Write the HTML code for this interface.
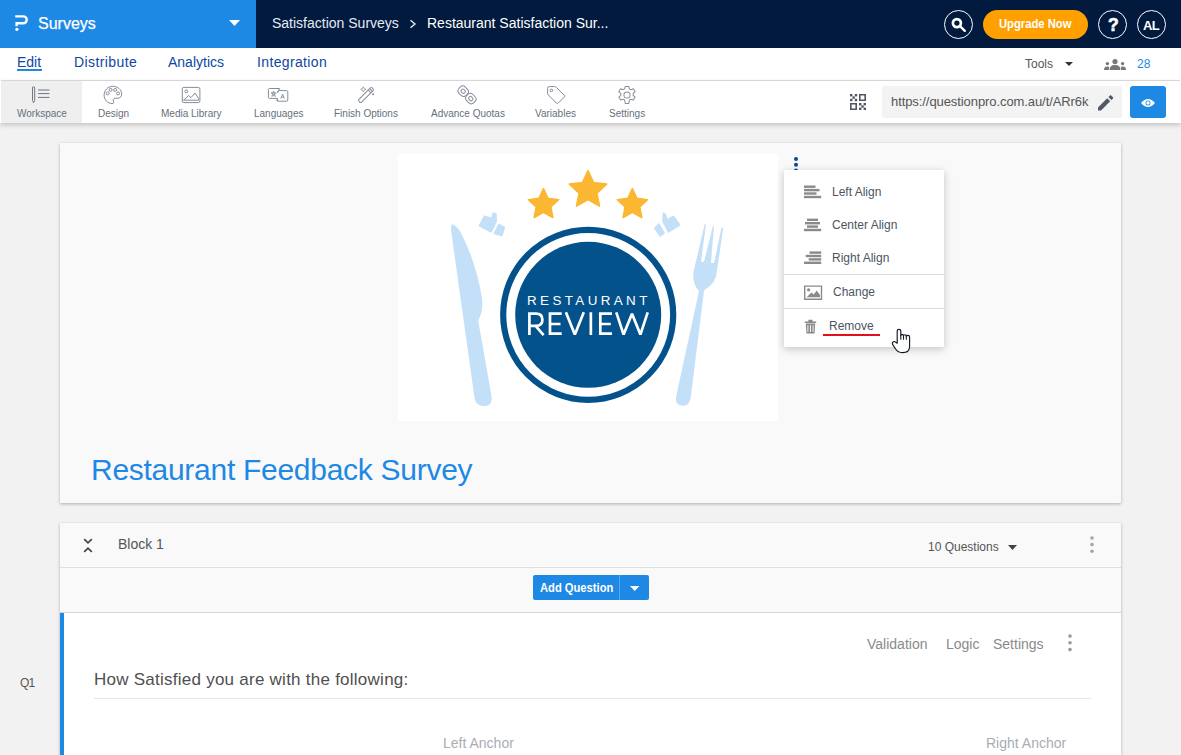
<!DOCTYPE html>
<html><head><meta charset="utf-8">
<style>
*{box-sizing:border-box;margin:0;padding:0}
html,body{width:1181px;height:755px;overflow:hidden;background:#f2f2f2;font-family:"Liberation Sans",sans-serif;position:relative}
.abs{position:absolute}
svg{position:absolute;overflow:visible}
#top{left:0;top:0;width:1181px;height:48px;background:#011a3e}
#brand{left:0;top:0;width:256px;height:48px;background:#1e88e5}
#nav{left:0;top:48px;width:1181px;height:33px;background:#fff}
#tool{left:0;top:81px;width:1181px;height:42px;background:#fff;box-shadow:0 2px 5px rgba(0,0,0,.2)}
.card{background:#f9f9f9;box-shadow:0 1px 3px rgba(0,0,0,.28)}
.t{position:absolute;white-space:nowrap;line-height:1}
.tl{font-size:10px;color:#66707d}
.mi{font-size:12px;color:#4d5561}
.circ{position:absolute;width:29px;height:29px;border:1.4px solid #fff;border-radius:50%;top:10px}
</style></head>
<body>
<!-- top bar -->
<div id="top" class="abs"></div>
<div id="brand" class="abs"></div>
<svg style="left:0;top:0" width="40" height="48" viewBox="0 0 40 48">
  <path d="M15.2 16.4 H23.3 A3.45 3.45 0 0 1 23.3 23.3 H16.6 V26.2" fill="none" stroke="#fff" stroke-width="2.4"/>
  <circle cx="16.9" cy="29.3" r="1.6" fill="#fff"/>
</svg>
<div class="t" style="left:38px;top:16px;font-size:16px;color:#fff;-webkit-text-stroke:0.25px #fff">Surveys</div>
<svg style="left:229px;top:20px" width="11" height="6" viewBox="0 0 11 6"><path d="M0 0H11L5.5 6Z" fill="#fff"/></svg>
<div class="t" style="left:272px;top:16px;font-size:14px;color:#e4ebf5">Satisfaction Surveys</div>
<svg style="left:409px;top:19px" width="8" height="10" viewBox="0 0 8 10"><path d="M1.5 1.2 L6 5 L1.5 8.8" fill="none" stroke="#e4ebf5" stroke-width="1.4"/></svg>
<div class="t" style="left:427px;top:16px;font-size:14px;color:#fff">Restaurant Satisfaction Sur...</div>

<div class="circ" style="left:944px"></div>
<svg style="left:944px;top:10px" width="29" height="29" viewBox="0 0 29 29">
  <circle cx="12.9" cy="13.1" r="4" fill="none" stroke="#fff" stroke-width="2.7"/>
  <path d="M16 16.2 L20.8 20.8" stroke="#fff" stroke-width="2.4" stroke-linecap="round"/>
</svg>
<div class="abs" style="left:983px;top:10px;width:105px;height:29px;border-radius:15px;background:#ffa000"></div>
<div class="t" style="left:999px;top:17px;font-size:13px;color:#fff;font-weight:bold;transform:scaleX(0.865);transform-origin:0 0">Upgrade Now</div>
<div class="circ" style="left:1098px"></div>
<div class="t" style="left:1108px;top:17px;font-size:17.5px;color:#fff;font-weight:bold;-webkit-text-stroke:0.6px #fff">?</div>
<div class="circ" style="left:1137px"></div>
<div class="t" style="left:1143px;top:19px;font-size:13px;color:#fff;font-weight:bold;letter-spacing:-0.7px">AL</div>

<!-- nav -->
<div id="nav" class="abs"></div>
<div class="abs" style="left:1px;top:80px;width:1179px;height:1px;background:#dddddd"></div>
<div class="t" style="left:17px;top:55px;font-size:14px;color:#0d47a1">Edit</div>
<div class="abs" style="left:17px;top:69px;width:25px;height:2px;background:#1e88e5"></div>
<div class="t" style="left:74px;top:55px;font-size:14px;color:#0d47a1;letter-spacing:0.4px">Distribute</div>
<div class="t" style="left:168px;top:55px;font-size:14px;color:#0d47a1">Analytics</div>
<div class="t" style="left:257px;top:55px;font-size:14px;color:#0d47a1;letter-spacing:0.36px">Integration</div>
<div class="t" style="left:1025px;top:58px;font-size:12px;color:#555">Tools</div>
<svg style="left:1065px;top:62px" width="8" height="4" viewBox="0 0 8 4"><path d="M0 0H8L4 4Z" fill="#333"/></svg>
<svg style="left:1104px;top:59px" width="22" height="11" viewBox="0 0 22 11">
  <circle cx="11" cy="2.6" r="2.6" fill="#777"/>
  <path d="M5.6 11 Q5.6 6 11 6 Q16.4 6 16.4 11Z" fill="#777"/>
  <circle cx="3.4" cy="4.6" r="1.7" fill="#777"/>
  <path d="M0 11 Q0 7.6 3.4 7.6 Q5 7.6 5.2 8.5 L4.8 11Z" fill="#777"/>
  <circle cx="18.6" cy="4.6" r="1.7" fill="#777"/>
  <path d="M22 11 Q22 7.6 18.6 7.6 Q17 7.6 16.8 8.5 L17.2 11Z" fill="#777"/>
</svg>
<div class="t" style="left:1137px;top:58px;font-size:12px;color:#1e88e5">28</div>

<!-- toolbar -->
<div id="tool" class="abs"></div>
<div class="abs" style="left:1px;top:81px;width:81px;height:42px;background:#efefef"></div>
<!-- workspace icon -->
<svg style="left:0;top:81px" width="100" height="42" viewBox="0 81 100 42" fill="none" stroke="#6f7782" stroke-width="1">
  <path d="M32.5 88 Q32.5 86.7 33.6 86.7 Q34.7 86.7 34.7 88 V100.4 L33.6 102.8 L32.5 100.4 Z"/>
  <path d="M38 90 H49.5 M38 93.6 H49.5 M38 97.4 H49.5"/>
</svg>
<div class="t tl" style="left:17px;top:109px">Workspace</div>
<!-- design palette -->
<svg style="left:0;top:81px" width="700" height="42" viewBox="0 81 700 42" fill="none" stroke="#858d98" stroke-width="1">
  <path d="M113 86.3 C107.6 86.3 104.1 90.4 104.1 95 C104.1 100 108 103.6 112 103.6 C113.8 103.6 114.2 102.4 113.6 101.3 C112.8 99.8 113.4 98.2 115.2 98.2 H117.6 C120 98.2 121.7 96.6 121.7 94 C121.7 89.8 117.8 86.3 113 86.3 Z"/>
  <circle cx="107.6" cy="93.4" r="1.5"/><circle cx="110.6" cy="89.9" r="1.5"/><circle cx="115.2" cy="89.9" r="1.5"/><circle cx="118.1" cy="93.4" r="1.5"/>
  <!-- media library -->
  <rect x="182.3" y="87.4" width="17.6" height="15.2" rx="1.6"/>
  <circle cx="186.3" cy="91.4" r="1.4"/>
  <path d="M183.6 100.2 L188.6 95.6 L191 97.6 L195 93 L198.6 98.6 V100.2 Z"/>
  <!-- languages -->
  <path d="M277.4 98.4 H269.4 Q268.4 98.4 268.4 97.4 V89.5 Q268.4 88.5 269.4 88.5 H279.6 L277.6 92.6 M277.6 92.6 Q277.6 90.6 279 90.6 H286.6 Q287.8 90.6 287.8 91.8 V100 Q287.8 101.2 286.6 101.2 H277.6 V98.6 L276.6 100.6"/>
  <path d="M273.6 91 L271.8 96.6 L276.2 92.8 H271 L275.4 96.6 Z" stroke-width="0.8" stroke-linejoin="round"/>
  <path d="M280.9 98.6 L282.6 94 L284.3 98.6 M281.5 97.2 H283.7" stroke-width="0.9"/>
  <!-- wand -->
  <g transform="rotate(-45 366 95)"><rect x="356.6" y="93.1" width="18.8" height="3.8" rx="1.3"/><path d="M371 93.1 V96.9 M373.1 93.1 V96.9"/></g>
  <path d="M363.3 86.8 Q363.7 89 365.9 89.4 Q363.7 89.8 363.3 92 Q362.9 89.8 360.7 89.4 Q362.9 89 363.3 86.8 Z" stroke-width="0.8"/>
  <circle cx="373.1" cy="94.3" r="1" fill="#858d98" stroke="none"/>
  <!-- chain -->
  <g transform="rotate(45 463.2 91.2)"><rect x="458.2" y="86.8" width="10" height="8.8" rx="3.6"/><rect x="461" y="89.4" width="4.4" height="3.6" rx="1.6"/></g>
  <g transform="rotate(45 470.8 98.6)"><rect x="465.8" y="94.2" width="10" height="8.8" rx="3.6"/><rect x="468.6" y="96.8" width="4.4" height="3.6" rx="1.6"/></g>
  <!-- tag -->
  <path d="M547.6 88.2 Q547.6 86.6 549.2 86.6 L554.6 86.6 Q555.6 86.6 556.3 87.3 L564.2 95.2 Q565.2 96.2 564.2 97.2 L558.4 103 Q557.4 104 556.4 103 L548.4 95 Q547.6 94.2 547.6 93.2 Z"/>
  <circle cx="551.4" cy="90.4" r="1.3"/>
  <!-- gear -->
  <g transform="translate(627 95) scale(1.1) translate(-627 -94.2)" stroke-width="0.91">
  <path d="M625.4 86.4 H628.6 L629.1 88.6 L630.6 89.4 L632.8 88.6 L634.4 91.3 L632.6 92.8 V94.6 L634.4 96.1 L632.8 98.8 L630.6 98 L629.1 98.8 L628.6 101.9 H625.4 L624.9 98.8 L623.4 98 L621.2 98.8 L619.6 96.1 L621.4 94.6 V92.8 L619.6 91.3 L621.2 88.6 L623.4 89.4 L624.9 88.6 Z" stroke-linejoin="round"/>
  <circle cx="627" cy="94.2" r="2.8"/>
</g>
</svg>
<div class="t tl" style="left:98px;top:109px">Design</div>
<div class="t tl" style="left:161px;top:109px">Media Library</div>
<div class="t tl" style="left:254px;top:109px">Languages</div>
<div class="t tl" style="left:334px;top:109px">Finish Options</div>
<div class="t tl" style="left:431px;top:109px">Advance Quotas</div>
<div class="t tl" style="left:535px;top:109px">Variables</div>
<div class="t tl" style="left:609px;top:109px">Settings</div>

<!-- QR -->
<svg style="left:850px;top:94px" width="16" height="16" viewBox="0 0 16 16" fill="#4f5864">
  <rect x="0" y="0" width="2.4" height="2.4"/><rect x="4.8" y="0" width="2.4" height="2.4"/><rect x="2.4" y="2.4" width="2.4" height="2.4"/><rect x="0" y="4.8" width="2.4" height="2.4"/><rect x="4.8" y="4.8" width="2.4" height="2.4"/>
  <path d="M9 0H16V7H9Z M10.6 1.6V5.4H14.4V1.6Z" fill-rule="evenodd"/>
  <path d="M0 9H7V16H0Z M1.6 10.6V14.4H5.4V10.6Z" fill-rule="evenodd"/>
  <rect x="9" y="9" width="2.4" height="2.4"/><rect x="13.6" y="9" width="2.4" height="2.4"/><rect x="11.3" y="11.3" width="2.4" height="2.4"/><rect x="9" y="13.6" width="2.4" height="2.4"/><rect x="13.6" y="13.6" width="2.4" height="2.4"/>
</svg>
<div class="abs" style="left:882px;top:86px;width:240px;height:32px;background:#f3f3f3;border-radius:3px;overflow:hidden">
  <div class="t" style="left:9px;top:9px;font-size:13px;color:#555;letter-spacing:-0.08px">https://questionpro.com.au/t/ARr6k</div>
</div>
<div class="abs" style="left:1090px;top:86px;width:32px;height:32px;background:#f3f3f3;border-radius:0 3px 3px 0"></div>
<svg style="left:1098px;top:95px" width="16" height="16" viewBox="0 0 16 16" fill="#4f5864">
  <path d="M0 12.4 V15.4 H3 L12.2 6.2 L9.2 3.2 Z"/>
  <path d="M10.4 2 L13.4 5 L15 3.4 Q15.6 2.8 15 2.2 L13.2 0.4 Q12.6 -0.2 12 0.4 Z"/>
</svg>
<div class="abs" style="left:1130px;top:86px;width:36px;height:32px;background:#1e88e5;border-radius:3px"></div>
<svg style="left:1141px;top:98px" width="14" height="10" viewBox="0 0 14 10">
  <path d="M0 5 Q7 -3 14 5 Q7 13 0 5Z" fill="#fff"/>
  <circle cx="7" cy="5" r="2.5" fill="#1e88e5"/>
  <circle cx="7" cy="5" r="1.75" fill="#fff"/>
</svg>

<!-- survey header card -->
<div class="abs card" style="left:60px;top:143px;width:1061px;height:360px"></div>
<div class="abs" style="left:398px;top:154px;width:380px;height:267px;background:#fff"></div>
<svg style="left:398px;top:154px" width="380" height="267" viewBox="398 154 380 267">
  <g fill="#fbb731" stroke="#fbb731" stroke-width="1.6" stroke-linejoin="round"><path d="M588.0 170.6 L593.5 182.6 L606.6 184.1 L596.9 193.1 L599.5 206.1 L588.0 199.6 L576.5 206.1 L579.1 193.1 L569.4 184.1 L582.5 182.6Z"/><path d="M543.5 188.7 L548.0 198.4 L558.6 199.7 L550.8 207.0 L552.8 217.5 L543.5 212.2 L534.2 217.5 L536.2 207.0 L528.4 199.7 L539.0 198.4Z"/><path d="M632.4 188.7 L636.9 198.4 L647.5 199.7 L639.7 207.0 L641.7 217.5 L632.4 212.2 L623.1 217.5 L625.1 207.0 L617.3 199.7 L627.9 198.4Z"/></g>
  <g fill="#c4e0f8" stroke="#c4e0f8" stroke-width="0" stroke-linejoin="round">
    <path d="M479.6 225.6 L484.5 216.4 L491.8 218.6 L493.4 213.5 L495.7 213.8 L496 221.2 L491 231.6 Z" stroke-width="2"/>
    <path d="M494.5 233.2 L499.1 224.8 L504.1 227.7 L501.8 235.3 Z" stroke-width="2"/>
    <path d="M655 228.2 L658.8 224.4 L663.9 233 L660.5 235.8 Z" stroke-width="2"/>
    <path d="M663.2 221.4 L663.5 213.6 L665.3 214.8 L666.6 220.3 L673.4 216.5 L679.4 224.8 L668.5 231.6 Z" stroke-width="2"/>
    <path d="M453 224.5 Q456.5 225.5 461 233 Q476 262 482 298 Q483.5 311 478.2 320.5 L491.5 396 Q493 406 484 406 Q476 406 474.5 398 L451 230 Q450.5 224 453 224.5 Z"/>
    <path d="M704.6 224.2 L706 224.2 L701 261.8 L704 261.8 L713 225.8 L714 225.8 L711 262.9 L714.1 262.9 L721.5 227.4 L723.2 228 L717 270.8 Q716.5 283 704 290.5 L690.8 397 Q689.5 406 682.5 405.8 Q675 405.2 676 397 L699 291 Q692 284 693.5 272 Z"/>
  </g>
  <circle cx="588.2" cy="314.8" r="85" fill="none" stroke="#04528c" stroke-width="6.2"/>
  <circle cx="588.2" cy="314.8" r="73" fill="#04528c"/>
  <text x="527" y="305.4" fill="#fff" font-family="Liberation Sans" font-size="13.4" letter-spacing="3.4">RESTAURANT</text>
  <path d="M529.4 335.1 V313.7 H536 Q542.4 313.7 542.4 319.75 Q542.4 325.8 536 325.8 H529.4 M535.6 325.8 L543.6 335.1 M561.7 313.7 H550 V333.7 H561.7 M550 324 H560.5 M590.85 312.3 V335.1 M612 313.7 H600.3 V333.7 H612 M600.3 324 H610.8" fill="none" stroke="#fff" stroke-width="2.7"/>
  <path d="M565.9 312.3 L574.85 334.6 L583.8 312.3 M616.3 312.3 L623.6 334.6 L632 313.8 L640.4 334.6 L647.7 312.3" fill="none" stroke="#fff" stroke-width="2.7" stroke-linejoin="bevel"/>
</svg>
<!-- kebab -->
<svg style="left:793px;top:156px" width="6" height="16" viewBox="0 0 6 16" fill="#0a4896">
  <circle cx="3" cy="3" r="2"/><circle cx="3" cy="8.8" r="2"/><circle cx="3" cy="14.6" r="2"/>
</svg>
<div class="t" style="left:91px;top:455px;font-size:30px;color:#1e88e5;letter-spacing:-0.28px">Restaurant Feedback Survey</div>

<!-- dropdown -->
<div class="abs" style="left:784px;top:170px;width:160px;height:177px;background:#fff;box-shadow:0 2px 8px rgba(0,0,0,.22)"></div>
<div class="abs" style="left:784px;top:274px;width:160px;height:1px;background:#dcdcdc"></div>
<div class="abs" style="left:784px;top:308px;width:160px;height:1px;background:#dcdcdc"></div>
<svg style="left:804px;top:185px" width="18" height="150" viewBox="0 0 18 150" fill="#8a8a8a">
  <rect x="0" y="0.5" width="11.5" height="2.4"/><rect x="0" y="3.9" width="15.5" height="2.4"/><rect x="0" y="7.3" width="12.5" height="2.4"/><rect x="0" y="10.8" width="17.2" height="2.4"/>
  <rect x="3" y="33.6" width="11" height="2.4"/><rect x="1" y="37" width="15" height="2.4"/><rect x="3" y="40.4" width="11" height="2.4"/><rect x="0" y="43.8" width="17.2" height="2.4"/>
  <rect x="5.5" y="66.4" width="11.7" height="2.4"/><rect x="1.7" y="69.8" width="15.5" height="2.4"/><rect x="4.7" y="73.2" width="12.5" height="2.4"/><rect x="0" y="76.6" width="17.2" height="2.4"/>
  <path d="M0 100.4H18.2V115H0Z M1.4 101.8V113.6H16.8V101.8Z" fill-rule="evenodd"/>
  <circle cx="4.6" cy="104.8" r="1.6"/>
  <path d="M2.6 112.2 L7.4 107.6 L9.8 109.6 L12.6 105.6 L16 110 V112.2Z"/>
  <path d="M0.8 136.6 H12.2 V138 H0.8Z M4.4 134.8 H8.6 V136.6 H4.4Z"/>
  <path d="M1.8 138.6 H11.2 L10.6 148.6 H2.4 Z M3.8 140 V147.2 M6.5 140 V147.2 M9.2 140 V147.2" />
</svg>
<svg style="left:804px;top:185px" width="18" height="150" viewBox="0 0 18 150"><path d="M3.9 140.2 V147 M6.5 140.2 V147 M9.1 140.2 V147" stroke="#fff" stroke-width="0.9"/></svg>
<div class="t mi" style="left:832px;top:186px">Left Align</div>
<div class="t mi" style="left:832px;top:219px">Center Align</div>
<div class="t mi" style="left:832px;top:252px">Right Align</div>
<div class="t mi" style="left:833px;top:286px">Change</div>
<div class="t mi" style="left:829px;top:320px">Remove</div>
<div class="abs" style="left:823px;top:334px;width:57px;height:2px;background:#e2101b"></div>
<!-- hand cursor -->
<svg style="left:885px;top:320px" width="35" height="38" viewBox="885 320 35 38">
  <path d="M897.2 343.2 V331 Q897.2 329.3 899 329.3 Q900.8 329.3 900.8 331 V335.6 Q900.8 334.3 902.1 334.3 Q903.4 334.3 903.5 335.8 Q903.6 334.7 904.9 334.7 Q906.3 334.7 906.3 336.2 Q906.5 335.3 908 335.3 Q909.6 335.3 909.6 337.2 V346.4 Q909.6 352.6 902.4 352.6 Q898 352.6 895.6 349 L892.6 344.4 Q891.8 343 893 342 Q894.2 341 895.4 342 Z" fill="#fff" stroke="#111827" stroke-width="1.15" stroke-linejoin="round"/>
  <path d="M900.8 335 V339.8 M903.5 335.6 V339.8 M906.3 336 V339.8" stroke="#111827" stroke-width="1.05"/>
</svg>

<!-- block card -->
<div class="abs card" style="left:60px;top:523px;width:1061px;height:240px"></div>
<div class="abs" style="left:60px;top:567px;width:1061px;height:1px;background:#dedede"></div>
<div class="abs" style="left:60px;top:612px;width:1061px;height:1px;background:#d6d6d6"></div>
<svg style="left:83px;top:538px" width="10" height="15" viewBox="0 0 10 15" fill="none" stroke="#444" stroke-width="1.7">
  <path d="M1.2 1.2 L5 4.8 L8.8 1.2"/>
  <path d="M1.2 13.8 L5 10.2 L8.8 13.8"/>
</svg>
<div class="t" style="left:118px;top:537px;font-size:14px;color:#555">Block 1</div>
<div class="t" style="left:928px;top:541px;font-size:12px;color:#555">10 Questions</div>
<svg style="left:1008px;top:545px" width="9" height="5" viewBox="0 0 9 5"><path d="M0 0H9L4.5 5Z" fill="#444"/></svg>
<svg style="left:1089px;top:535px" width="6" height="19" viewBox="0 0 6 19" fill="#a6a6a6">
  <circle cx="3" cy="3" r="1.8"/><circle cx="3" cy="9.6" r="1.8"/><circle cx="3" cy="16.2" r="1.8"/>
</svg>
<div class="abs" style="left:533px;top:575px;width:116px;height:25px;background:#1e88e5;border-radius:2px"></div>
<div class="abs" style="left:619px;top:575px;width:1px;height:25px;background:#5aa9ee"></div>
<div class="t" style="left:540px;top:581px;font-size:13px;color:#fff;font-weight:bold;transform:scaleX(0.86);transform-origin:0 0">Add Question</div>
<svg style="left:630px;top:586px" width="10" height="5" viewBox="0 0 10 5"><path d="M0 0H9.4L4.7 5Z" fill="#fff"/></svg>

<!-- question card -->
<div class="abs" style="left:60px;top:613px;width:1061px;height:150px;background:#fff;border-left:4px solid #1e88e5"></div>
<div class="t" style="left:867px;top:637px;font-size:14px;color:#8a8a8a">Validation</div>
<div class="t" style="left:946px;top:637px;font-size:14px;color:#8a8a8a">Logic</div>
<div class="t" style="left:993px;top:637px;font-size:14px;color:#8a8a8a">Settings</div>
<svg style="left:1067px;top:633px" width="6" height="19" viewBox="0 0 6 19" fill="#9a9a9a">
  <circle cx="3" cy="3.1" r="1.8"/><circle cx="3" cy="9.8" r="1.8"/><circle cx="3" cy="16.6" r="1.8"/>
</svg>
<div class="t" style="left:20px;top:677px;font-size:12px;color:#555;letter-spacing:-0.8px">Q1</div>
<div class="t" style="left:94px;top:671px;font-size:17px;color:#4f4f4f;letter-spacing:0.25px">How Satisfied you are with the following:</div>
<div class="abs" style="left:94px;top:698px;width:997px;height:1px;background:#e6e6e6"></div>
<div class="t" style="left:443px;top:736px;font-size:14px;color:#a9adb4">Left Anchor</div>
<div class="t" style="left:986px;top:736px;font-size:14px;color:#a9adb4">Right Anchor</div>
</body></html>
